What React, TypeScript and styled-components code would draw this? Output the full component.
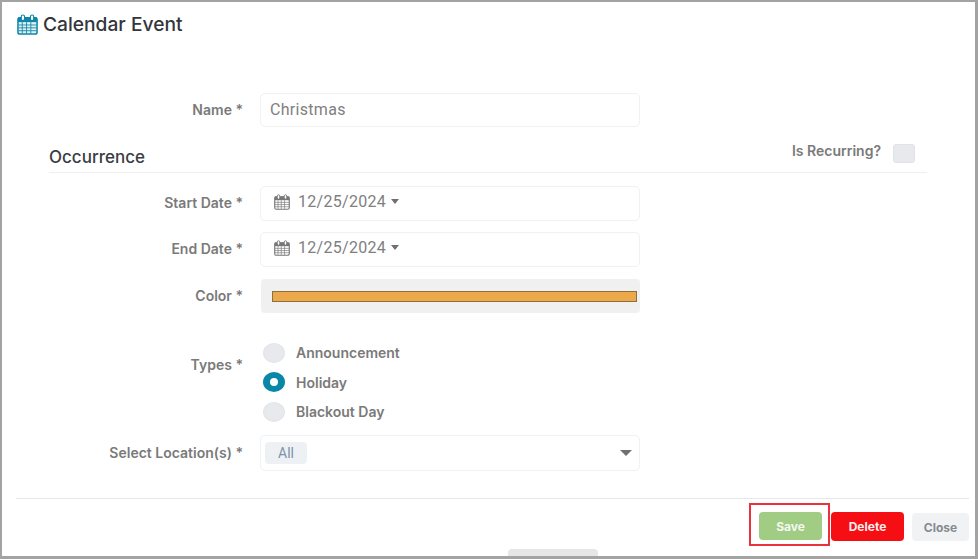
import styled, { createGlobalStyle } from "styled-components";

const GlobalStyle = createGlobalStyle`
  html, body {
    margin: 0;
    padding: 0;
    background: #fff;
  }
  * {
    box-sizing: border-box;
  }
`;

const Frame = styled.div`
  position: relative;
  width: 978px;
  height: 559px;
  overflow: hidden;
  background: #fff;
  border-style: solid;
  border-color: #a3a3a3;
  border-width: 2px 3px 3px 2px;
  font-family: Inter, Roboto, "Liberation Sans", sans-serif;
  display: flex;
  flex-direction: column;
`;

const Header = styled.div`
  height: 91px;
  padding: 11px 0 0 15px;
  display: flex;
  align-items: flex-start;
  gap: 5px;
`;

const Title = styled.h1`
  margin: 0;
  font-size: 19.2px;
  line-height: 22px;
  font-weight: 500;
  color: #33363b;
`;

const Row = styled.div<{ $h: number; $mb?: number; $top?: boolean }>`
  display: grid;
  grid-template-columns: 241px 380px;
  column-gap: 17px;
  align-items: ${(p) => (p.$top ? "start" : "center")};
  height: ${(p) => p.$h}px;
  margin-bottom: ${(p) => p.$mb ?? 0}px;
`;

const Label = styled.label<{ $pt?: number }>`
  text-align: right;
  font-size: 14px;
  font-weight: 600;
  color: #7a7a7a;
  padding-top: ${(p) => p.$pt ?? 0}px;
  padding-bottom: ${(p) => (p.$pt ? 0 : 2)}px;
`;

const Field = styled.div`
  height: 100%;
  display: flex;
  align-items: center;
  border: 1px solid #f0f1f3;
  border-radius: 5px;
  background: #fff;
  padding: 0 9px 2px;
  font-family: Roboto, "Liberation Sans", sans-serif;
  font-size: 16px;
  color: #808080;
  letter-spacing: 0.3px;
`;

const DateField = styled(Field)`
  padding: 0 0 4px 13px;
`;

const DateText = styled.span`
  margin: 0 5px 0 8px;
`;

const Caret = styled.span<{ $w?: number }>`
  width: 0;
  height: 0;
  border-style: solid;
  border-color: #707070 transparent transparent;
  border-width: ${(p) => ((p.$w ?? 9) * 5) / 9}px ${(p) => (p.$w ?? 9) / 2}px 0;
`;

const Section = styled.div`
  height: 27px;
  margin: 19px 48px 13px 47px;
  display: flex;
  justify-content: space-between;
  border-bottom: 1px solid #eeeff1;
`;

const SectionTitle = styled.h2`
  margin: 0;
  padding-top: 1px;
  font-size: 17px;
  line-height: 20px;
  font-weight: 500;
  color: #3a3d42;
`;

const Recurring = styled.div`
  display: flex;
  gap: 12px;
  margin-top: -4px;
  padding-right: 12px;
  font-size: 14px;
  font-weight: 600;
  color: #7a7a7a;
  height: 20px;
  align-items: flex-start;
`;

const CheckBox = styled.span`
  width: 22px;
  height: 19px;
  margin-top: 2px;
  background: #e7e9ed;
  border: 1px solid #e1e3e8;
  border-radius: 3px;
`;

const ColorField = styled.div`
  height: 100%;
  display: flex;
  align-items: center;
  margin-left: 1px;
  padding: 0 3px 0 11px;
  background: #f0f0f0;
  border-radius: 4px;
`;

const Swatch = styled.div`
  width: 100%;
  height: 11px;
  background: #eca94b;
  border: 1px solid #8c7040;
`;

const RadioList = styled.div`
  display: flex;
  flex-direction: column;
  gap: 8px;
`;

const RadioRow = styled.div`
  display: flex;
  align-items: center;
  gap: 11px;
  height: 21.5px;
  padding-left: 3px;
  font-size: 14px;
  font-weight: 600;
  color: #7a7a7a;
`;

const Radio = styled.span<{ $on?: boolean }>`
  width: 22px;
  height: 20px;
  border-radius: 50%;
  background: ${(p) => (p.$on ? "#fff" : "#e7e9ed")};
  border-style: solid;
  border-color: ${(p) => (p.$on ? "#0a87a6" : "#e2e4e8")};
  border-width: ${(p) => (p.$on ? "6px 7px" : "1px")};
`;

const Tag = styled.span`
  background: #eef1f4;
  border-radius: 4px;
  color: #7d92aa;
  font-size: 14px;
  letter-spacing: 0;
  padding: 3px 13px;
`;

const LocationField = styled(Field)`
  justify-content: space-between;
  padding: 0 7px 0 4px;
`;

const Footer = styled.div`
  margin: 27px 6px 0 14px;
  height: 49px;
  border-top: 1px solid #e6e7e9;
  display: flex;
  justify-content: flex-end;
  align-items: flex-start;
  padding-top: 4px;
`;

const Highlight = styled.div`
  width: 81px;
  height: 43px;
  border: 2px solid #e8323c;
  padding: 7px 0 0 8px;
  margin-right: 1px;
`;

const Button = styled.button<{ $bg: string; $fg: string; $w: number; $h: number; $mt?: number; $ml?: number }>`
  display: block;
  width: ${(p) => p.$w}px;
  height: ${(p) => p.$h}px;
  margin-top: ${(p) => p.$mt ?? 0}px;
  margin-left: ${(p) => p.$ml ?? 0}px;
  background: ${(p) => p.$bg};
  color: ${(p) => p.$fg};
  border: none;
  border-radius: 4px;
  padding: 0;
  font-family: inherit;
  font-size: 12px;
  font-weight: 700;
`;

const Tab = styled.div`
  position: absolute;
  left: 506px;
  bottom: 0;
  width: 90px;
  height: 7px;
  background: #e6e6e6;
  border-radius: 4px 4px 0 0;
`;

const IconBox = styled.span`
  display: flex;
  padding-top: 1px;
`;

const CalendarIcon = ({ size, color, light }: { size: number; color: string; light?: boolean }) => (
  <svg width={size} height={size} viewBox="0 0 22 22" style={{ flex: "none" }}>
    <rect x="1" y="4" width="20" height="17" rx="2" fill={light ? "none" : "#dff0f5"} stroke={color} strokeWidth="1.6" />
    <rect x="1" y="3.5" width="20" height="5" fill={color} />
    <path
      d="M5.5 8.5v12M10 8.5v12M14.5 8.5v12M1.5 11.5h19M1.5 14.5h19M1.5 17.5h19"
      fill="none"
      stroke={color}
      strokeWidth="1"
      opacity="0.9"
    />
    <rect x="4.5" y="1" width="3.4" height="6" rx="1.7" fill="#fff" stroke={color} strokeWidth="1.2" />
    <rect x="14.1" y="1" width="3.4" height="6" rx="1.7" fill="#fff" stroke={color} strokeWidth="1.2" />
  </svg>
);

function App() {
  return (
    <>
      <GlobalStyle />
      <Frame>
        <Header>
          <IconBox>
            <CalendarIcon size={21} color="#0f86a8" />
          </IconBox>
          <Title>Calendar Event</Title>
        </Header>

        <Row $h={34}>
          <Label>Name *</Label>
          <Field>Christmas</Field>
        </Row>

        <Section>
          <SectionTitle>Occurrence</SectionTitle>
          <Recurring>
            Is Recurring?
            <CheckBox />
          </Recurring>
        </Section>

        <Row $h={35} $mb={11}>
          <Label>Start Date *</Label>
          <DateField>
            <CalendarIcon size={16} color="#777" light />
            <DateText>12/25/2024</DateText>
            <Caret />
          </DateField>
        </Row>
        <Row $h={35} $mb={12}>
          <Label>End Date *</Label>
          <DateField>
            <CalendarIcon size={16} color="#777" light />
            <DateText>12/25/2024</DateText>
            <Caret />
          </DateField>
        </Row>
        <Row $h={34} $mb={29}>
          <Label>Color *</Label>
          <ColorField>
            <Swatch />
          </ColorField>
        </Row>

        <Row $h={80} $mb={13} $top>
          <Label $pt={14}>Types *</Label>
          <RadioList>
            <RadioRow>
              <Radio />
              Announcement
            </RadioRow>
            <RadioRow>
              <Radio $on />
              Holiday
            </RadioRow>
            <RadioRow>
              <Radio />
              Blackout Day
            </RadioRow>
          </RadioList>
        </Row>

        <Row $h={36}>
          <Label>Select Location(s) *</Label>
          <LocationField>
            <Tag>All</Tag>
            <Caret $w={12} />
          </LocationField>
        </Row>

        <Footer>
          <Highlight>
            <Button $bg="#a0cc84" $fg="#f4f8ef" $w={63} $h={28}>
              Save
            </Button>
          </Highlight>
          <Button $bg="#f50f14" $fg="#fdeeee" $w={73} $h={29} $mt={9}>
            Delete
          </Button>
          <Button $bg="#f1f2f4" $fg="#858a90" $w={57} $h={28} $mt={10} $ml={8}>
            Close
          </Button>
        </Footer>

        <Tab />
      </Frame>
    </>
  );
}

export default App;
